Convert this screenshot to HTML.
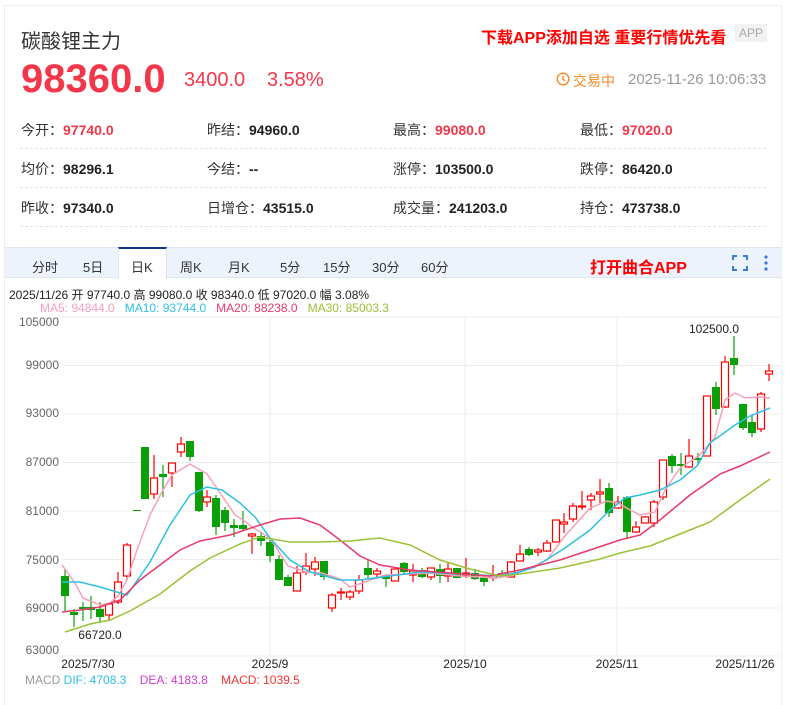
<!DOCTYPE html>
<html><head><meta charset="utf-8">
<style>
*{margin:0;padding:0;box-sizing:border-box}
body{width:785px;height:675px;overflow:hidden;background:#fff;font-family:"Liberation Sans","Noto Sans CJK SC",sans-serif;color:#333;position:relative}
.card{position:absolute;left:4px;top:5px;width:778px;height:700px;border:1px solid #eceef2;border-bottom:none}
.abs{position:absolute;white-space:nowrap}
.lbl{font-size:14px;color:#333}
.lbl b{font-weight:bold;color:#222}
.lbl b.r{color:#f2374a}
.dash{position:absolute;left:20px;width:746px;border-top:1px dashed #e3e3e3}
.tabs{position:absolute;left:5px;top:247px;width:776px;height:31px;background:#ecf3fd;border-top:1px solid #dce5f0;border-bottom:1px solid #dce5f0}
.tab{position:absolute;top:9px;font-size:13px;color:#333}
.act{position:absolute;left:113px;top:-1px;width:49px;height:32px;background:#fff;border-top:2px solid #13318a;border-left:1px solid #dce5f0;border-right:1px solid #dce5f0}
</style></head><body>
<div class="card"></div>
<div class="abs" style="left:21px;top:25px;font-size:20px;color:#333">碳酸锂主力</div>
<div class="abs" style="left:481px;top:24px;font-size:16px;font-weight:bold;color:#f00">下载APP添加自选 重要行情优先看</div>
<div class="abs" style="left:735px;top:24px;width:32px;height:18px;background:#f2f2f2;color:#aaa;font-size:12px;text-align:center;line-height:18px">APP</div>
<div class="abs" style="left:21px;top:57px;font-size:40px;font-weight:bold;color:#f2374a">98360.0</div>
<div class="abs" style="left:184px;top:69px;font-size:20px;color:#f2374a">3400.0</div>
<div class="abs" style="left:267px;top:69px;font-size:20px;color:#f2374a">3.58%</div>
<svg class="abs" style="left:556px;top:72px" width="14" height="14" viewBox="0 0 14 14"><circle cx="7" cy="7" r="5.8" fill="none" stroke="#f08a24" stroke-width="1.4"/><path d="M7 3.6V7.3L9.2 9" fill="none" stroke="#f08a24" stroke-width="1.4"/></svg>
<div class="abs" style="left:573px;top:71px;font-size:14px;color:#f08a24">交易中</div>
<div class="abs" style="left:628px;top:71px;font-size:15px;color:#999">2025-11-26 10:06:33</div>

<div class="abs lbl" style="left:21px;top:120px">今开：<b class="r">97740.0</b></div>
<div class="abs lbl" style="left:207px;top:120px">昨结：<b>94960.0</b></div>
<div class="abs lbl" style="left:393px;top:120px">最高：<b class="r">99080.0</b></div>
<div class="abs lbl" style="left:580px;top:120px">最低：<b class="r">97020.0</b></div>
<div class="dash" style="top:148px"></div>
<div class="abs lbl" style="left:21px;top:159px">均价：<b>98296.1</b></div>
<div class="abs lbl" style="left:207px;top:159px">今结：<b>--</b></div>
<div class="abs lbl" style="left:393px;top:159px">涨停：<b>103500.0</b></div>
<div class="abs lbl" style="left:580px;top:159px">跌停：<b>86420.0</b></div>
<div class="dash" style="top:187px"></div>
<div class="abs lbl" style="left:21px;top:198px">昨收：<b>97340.0</b></div>
<div class="abs lbl" style="left:207px;top:198px">日增仓：<b>43515.0</b></div>
<div class="abs lbl" style="left:393px;top:198px">成交量：<b>241203.0</b></div>
<div class="abs lbl" style="left:580px;top:198px">持仓：<b>473738.0</b></div>
<div class="dash" style="top:226px"></div>

<div class="tabs">
<div class="act"></div>
<div class="tab" style="left:27px">分时</div>
<div class="tab" style="left:78px">5日</div>
<div class="tab" style="left:126px">日K</div>
<div class="tab" style="left:175px">周K</div>
<div class="tab" style="left:223px">月K</div>
<div class="tab" style="left:275px">5分</div>
<div class="tab" style="left:318px">15分</div>
<div class="tab" style="left:367px">30分</div>
<div class="tab" style="left:416px">60分</div>
<div class="tab" style="left:585px;top:6px;font-size:16px;font-weight:bold;color:#f00">打开曲合APP</div>
<svg style="position:absolute;left:727px;top:7px" width="16" height="16" viewBox="0 0 16 16"><path d="M1 5V1H5M11 1H15V5M15 11V15H11M5 15H1V11" fill="none" stroke="#3a7bd5" stroke-width="2"/></svg>
<svg style="position:absolute;left:758px;top:6px" width="6" height="18" viewBox="0 0 6 18"><circle cx="3" cy="3" r="1.6" fill="#3a7bd5"/><circle cx="3" cy="9" r="1.6" fill="#3a7bd5"/><circle cx="3" cy="15" r="1.6" fill="#3a7bd5"/></svg>
</div>

<div class="abs" style="left:9px;top:286px;font-size:12px;color:#222">2025/11/26 开 97740.0 高 99080.0 收 98340.0 低 97020.0 幅 3.08%</div>
<div class="abs" style="left:40px;top:301px;font-size:12px"><span style="color:#f7a1b9">MA5: 94844.0</span>&nbsp;&nbsp;&nbsp;<span style="color:#2ec0e2">MA10: 93744.0</span>&nbsp;&nbsp;&nbsp;<span style="color:#e8396a">MA20: 88238.0</span>&nbsp;&nbsp;&nbsp;<span style="color:#9bc136">MA30: 85003.3</span></div>

<svg id="ch" class="abs" style="left:0;top:0" width="785" height="675" font-family="Liberation Sans, sans-serif">
<g stroke="#ececec" stroke-width="1">
<line x1="62" y1="317" x2="780" y2="317"/><line x1="62" y1="365.5" x2="780" y2="365.5"/><line x1="62" y1="414" x2="780" y2="414"/><line x1="62" y1="462.5" x2="780" y2="462.5"/><line x1="62" y1="511" x2="780" y2="511"/><line x1="62" y1="559.5" x2="780" y2="559.5"/><line x1="62" y1="608" x2="780" y2="608"/><line x1="62" y1="656" x2="780" y2="656"/>
<line x1="270" y1="317" x2="270" y2="657"/><line x1="465" y1="317" x2="465" y2="657"/><line x1="617" y1="317" x2="617" y2="657"/>
</g>
<g font-size="12" fill="#666" text-anchor="end">
<text x="59" y="326">105000</text><text x="59" y="369">99000</text><text x="59" y="417">93000</text><text x="59" y="466">87000</text><text x="59" y="515">81000</text><text x="59" y="564">75000</text><text x="59" y="612">69000</text><text x="59" y="654">63000</text>
</g>
<g font-size="12" fill="#222" text-anchor="middle">
<text x="88" y="668">2025/7/30</text><text x="270" y="668">2025/9</text><text x="465" y="668">2025/10</text><text x="617" y="668">2025/11</text><text x="745" y="668">2025/11/26</text>
<text x="100" y="639">66720.0</text><text x="714" y="333">102500.0</text>
</g>
<g id="cd"></g>
<g fill="none" stroke-width="1.5" id="ma"></g>
</svg>
<div class="abs" style="left:25px;top:673px;font-size:12px;color:#999">MACD <span style="color:#2ec0e2">DIF: 4708.3</span>&nbsp;&nbsp;&nbsp;&nbsp;<span style="color:#d23bd2">DEA: 4183.8</span>&nbsp;&nbsp;&nbsp;&nbsp;<span style="color:#e33">MACD: 1039.5</span></div>
<script>
var C=[
[65,576,596,569,612,'g'],[74,612,615,609,627,'g'],[83,607,609,602,621,'g'],[91,607,610,596,619,'g'],[100,609,617,602,623,'g'],[109,604,615,603,620,'r'],[118,582,602,572,604,'r'],[127,545,576,543,580,'r'],[137,510,511,510,511,'g'],[145,447,499,447,499,'g'],[154,478,494,455,499,'r'],[163,474,477,465,497,'g'],[172,463,473,463,487,'r'],[181,444,452,437,457,'r'],[190,441,457,441,461,'g'],[199,472,511,472,512,'g'],[207,497,502,490,507,'r'],[216,498,527,495,535,'g'],[225,510,523,507,531,'g'],[234,525,528,519,537,'g'],[243,525,529,511,530,'g'],[252,534,536,533,554,'r'],[261,536,541,533,546,'g'],[270,542,556,540,562,'g'],[279,559,580,555,580,'g'],[288,577,586,575,586,'g'],[297,573,591,566,591,'r'],[306,566,572,553,575,'r'],[315,562,569,557,576,'r'],[324,561,577,561,580,'g'],[332,595,608,593,612,'r'],[341,592,593,588,600,'r'],[350,592,597,590,600,'r'],[359,580,591,575,594,'r'],[368,568,575,559,579,'g'],[377,571,574,568,578,'r'],[386,575,579,575,587,'g'],[395,569,581,569,581,'r'],[404,563,572,562,575,'g'],[413,571,575,564,582,'r'],[422,570,577,568,578,'g'],[431,568,577,568,580,'r'],[440,569,576,564,583,'g'],[448,569,576,563,582,'r'],[457,568,578,568,578,'g'],[466,573,575,558,578,'r'],[475,573,579,569,580,'g'],[484,577,582,575,586,'g'],[493,576,578,565,581,'r'],[502,573,574,570,576,'g'],[511,562,577,561,577,'r'],[520,554,561,545,561,'r'],[529,549,555,547,556,'g'],[538,550,552,548,556,'r'],[547,543,551,540,552,'r'],[556,520,542,520,542,'r'],[564,522,524,513,533,'r'],[573,506,519,503,522,'r'],[582,506,507,491,510,'r'],[591,496,500,493,510,'r'],[600,492,494,479,503,'r'],[609,488,513,483,517,'g'],[618,502,508,496,509,'r'],[627,497,532,496,539,'g'],[636,527,532,521,533,'r'],[645,517,523,516,523,'r'],[654,502,523,500,527,'r'],[663,460,497,460,500,'r'],[672,456,466,454,473,'g'],[681,464,466,453,475,'g'],[689,456,467,439,468,'r'],[698,458,460,453,465,'g'],[707,396,456,396,456,'r'],[716,387,409,382,415,'g'],[725,362,407,356,408,'r'],[734,358,365,336,375,'g'],[743,404,428,404,430,'g'],[752,422,433,415,437,'g'],[761,394,429,392,432,'r'],[769,371,374,364,381,'r']];
var s='';
C.forEach(function(c){var col=c[5]=='r'?'#f00':'#0aa00a';
s+='<line x1="'+c[0]+'" x2="'+c[0]+'" y1="'+c[3]+'" y2="'+c[4]+'" stroke="'+col+'" stroke-width="1.2"/>';
var h=Math.max(1,c[2]-c[1]);
if(c[5]=='r')s+='<rect x="'+(c[0]-3.5)+'" y="'+c[1]+'" width="7" height="'+h+'" fill="#fff" stroke="#f00" stroke-width="1.2"/>';
else s+='<rect x="'+(c[0]-4)+'" y="'+c[1]+'" width="8" height="'+h+'" fill="#0aa00a"/>';});
document.getElementById('cd').innerHTML=s;
var M=[['#f7a1b9','62,565 75,583 83,598 100,605 110,603 118,596 127,580 137,550 150,515 163,490 172,475 190,464 207,474 216,487 235,515 243,520 252,527 270,538 288,566 306,572 322,573 340,579 350,587 365,582 385,575 410,574 430,573 460,576 480,577 495,578 510,576 525,570 547,560 564,537 590,508 607,501 618,503 630,510 640,515 655,512 665,490 680,468 700,455 715,437 725,400 735,393 745,398 760,397 770,398'],
['#2ec0e2','62,582 80,582 100,587 110,590 127,595 150,562 170,525 190,495 207,487 222,490 240,503 255,517 270,538 290,560 310,572 340,580 360,580 390,576 420,572 460,574 500,576 520,572 535,567 565,548 590,530 610,510 625,498 640,495 660,490 680,480 697,466 710,443 735,425 750,416 770,408'],
['#e8396a','62,612 80,610 100,607 120,600 140,580 160,565 180,550 200,541 230,535 260,525 280,519 300,518 320,525 340,540 360,556 380,565 410,570 450,573 490,576 520,570 560,560 590,550 620,540 640,535 660,520 690,495 720,474 740,466 770,452'],
['#9bc136','65,632 90,624 110,620 130,611 160,594 190,571 210,558 240,544 260,537 290,542 320,542 350,541 380,538 410,545 440,560 470,569 500,576 520,574 560,568 600,559 620,553 650,546 680,534 710,522 740,500 770,479']];
var m='';M.forEach(function(a){m+='<polyline points="'+a[1]+'" stroke="'+a[0]+'"/>';});
document.getElementById('ma').innerHTML=m;
</script>
</body></html>
